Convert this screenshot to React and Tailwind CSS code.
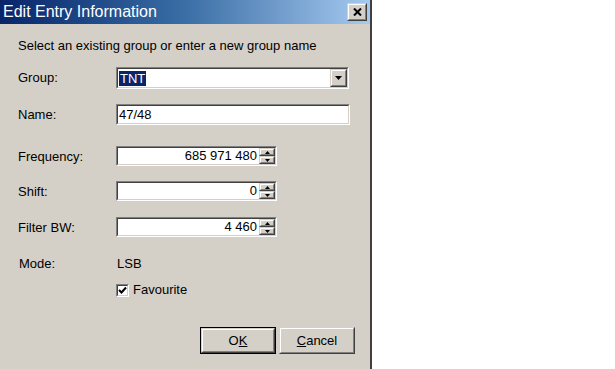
const font = { fontFamily: '"Liberation Sans", Arial, sans-serif' };

function Sunken({ className = '', children }) {
    return (
        <div className={`border border-t-[#808080] border-l-[#808080] border-b-white border-r-white ${className}`}>
            <div className="h-full w-full border border-t-[#404040] border-l-[#404040] border-b-[#d4d0c8] border-r-[#d4d0c8] bg-white flex">
                {children}
            </div>
        </div>
    );
}

function Raised({ className = '', children }) {
    return (
        <div className={`border border-t-[#d4d0c8] border-l-[#d4d0c8] border-b-[#404040] border-r-[#404040] bg-[#d4d0c8] ${className}`}>
            <div className="h-full w-full border border-t-white border-l-white border-b-[#808080] border-r-[#808080] flex items-center justify-center">
                {children}
            </div>
        </div>
    );
}

function Arrow({ up, w = 5, h = 3 }) {
    return (
        <svg width={w} height={h} viewBox={`0 0 ${w} ${h}`} className="block">
            <polygon points={up ? `${w / 2},0 ${w},${h} 0,${h}` : `0,0 ${w},0 ${w / 2},${h}`} fill="#000" />
        </svg>
    );
}

function SpinBox({ value }) {
    return (
        <Sunken className="w-[161px] h-[20px]">
            <div className="flex-1 text-right pr-[2px] text-[13px] leading-[16px] text-black">{value}</div>
            <div className="w-[16px] flex flex-col">
                <Raised className="h-[8px] w-full"><Arrow up /></Raised>
                <Raised className="h-[8px] w-full"><Arrow /></Raised>
            </div>
        </Sunken>
    );
}

function Label({ children }) {
    return <div className="w-[98px] pt-[3px] text-[13px] leading-[16px]">{children}</div>;
}

export default function App() {
    return (
        <div className="w-[615px] h-[369px] bg-white flex overflow-hidden text-black" style={font}>
            <div className="w-[372px] h-full bg-[#d4d0c8] border-r-2 border-r-[#404040] flex flex-col">
                <div className="h-[24px] flex items-center justify-between pl-[3px] pr-[3px] bg-gradient-to-r from-[#0a246a] via-[#3a6ea5] to-[#a6caf0]">
                    <span className="text-white text-[16px] leading-[20px]">Edit Entry Information</span>
                    <Raised className="w-[20px] h-[18px]">
                        <svg width="9" height="8" viewBox="0 0 9 8">
                            <path d="M1 0.5 L8 7.5 M8 0.5 L1 7.5" stroke="#000" strokeWidth="2" />
                        </svg>
                    </Raised>
                </div>

                <div className="pl-[18px] flex flex-col text-[13px]">
                    <div className="mt-[14px] h-[16px] leading-[16px]">Select an existing group or enter a new group name</div>

                    <div className="mt-[13px] h-[22px] flex">
                        <Label>Group:</Label>
                        <Sunken className="w-[233px] h-[22px]">
                            <div className="flex-1 flex items-center pl-[1px]">
                                <span className="bg-[#0a246a] text-white leading-[15px] px-[1px]">TNT</span>
                            </div>
                            <Raised className="w-[17px] h-full"><Arrow w={7} h={4} /></Raised>
                        </Sunken>
                    </div>

                    <div className="mt-[15px] h-[21px] flex">
                        <Label>Name:</Label>
                        <Sunken className="w-[234px] h-[21px]">
                            <div className="pl-[1px] leading-[17px]">47/48</div>
                        </Sunken>
                    </div>

                    <div className="mt-[21px] h-[20px] flex">
                        <Label>Frequency:</Label>
                        <SpinBox value="685 971 480" />
                    </div>

                    <div className="mt-[15px] h-[20px] flex">
                        <Label>Shift:</Label>
                        <SpinBox value="0" />
                    </div>

                    <div className="mt-[16px] h-[20px] flex">
                        <Label>Filter BW:</Label>
                        <SpinBox value="4 460" />
                    </div>

                    <div className="mt-[19px] h-[16px] flex leading-[16px]">
                        <div className="w-[99px] pl-[1px]">Mode:</div>
                        <div>LSB</div>
                    </div>

                    <div className="mt-[11px] h-[14px] flex items-center pl-[98px] gap-[4px]">
                        <Sunken className="w-[13px] h-[13px]">
                            <svg width="9" height="9" viewBox="0 0 9 9" className="block m-auto">
                                <path d="M1 4 L3.5 6.5 L8 1.5" stroke="#000" strokeWidth="2" fill="none" />
                            </svg>
                        </Sunken>
                        <span className="leading-[16px]">Favourite</span>
                    </div>

                    <div className="mt-[30px] flex justify-end gap-[3px] pr-[15px]">
                        <div className="border border-black">
                            <Raised className="w-[74px] h-[25px]">
                                <span>O<span className="underline">K</span></span>
                            </Raised>
                        </div>
                        <Raised className="w-[76px] h-[27px]">
                            <span><span className="underline">C</span>ancel</span>
                        </Raised>
                    </div>
                </div>
            </div>
        </div>
    );
}
